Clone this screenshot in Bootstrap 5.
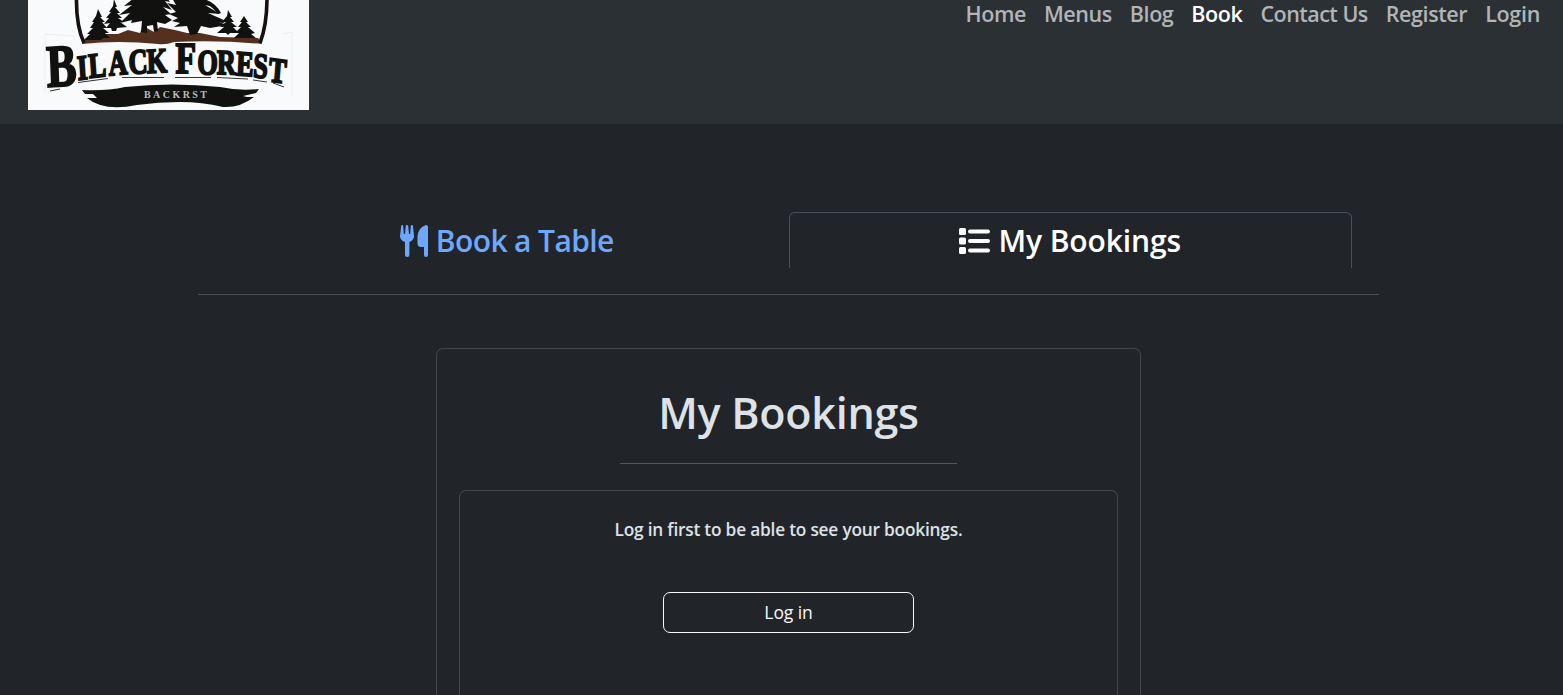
<!DOCTYPE html>
<html lang="en" data-bs-theme="dark">
<head>
<meta charset="utf-8">
<meta name="viewport" content="width=device-width, initial-scale=1">
<title>Black Forest - Bookings</title>
<link href="https://cdn.jsdelivr.net/npm/bootstrap@5.3.0/dist/css/bootstrap.min.css" rel="stylesheet">
<style>
html{font-size:18px}
body{font-family:"Open Sans","Noto Sans",sans-serif;background:#212529;height:695px;overflow:hidden}
.site-header{height:124px;background:#2b3035;padding:0 14px 0 28px}
.site-logo{width:281px;height:110px;display:block}
.top-links{line-height:28px}
.top-links .nav-link{font-size:21.5px;font-weight:600;letter-spacing:-.42px;padding:0 9px;color:#b2b4b6;white-space:nowrap}
.top-links .nav-link.active{color:#fff}
.top-links .contact{letter-spacing:-.52px}
.top-links .short{letter-spacing:-.3px}
.tabs-wrap{width:1181px;margin:88px 0 0 198px;padding:0 27px 26px;border-bottom:1px solid #4b5054}
.tabs-wrap .nav-link{height:56px;padding:0;font-size:30px;font-weight:600;letter-spacing:-.62px;border:1px solid transparent;border-bottom:0;border-radius:6px 6px 0 0;color:#6ea8fe;gap:8px}
.tabs-wrap .nav-link.active{color:#fff;border-color:#495057;background:transparent;letter-spacing:-.1px}
.booking-panel{width:705px;margin:53px 0 0 436px;height:347px;padding:0 22px;border:1px solid #42464a;border-bottom:0;border-radius:7px 7px 0 0;background:#212529}
.booking-panel h1{font-size:43px;font-weight:600;letter-spacing:-.25px;line-height:54px;margin:0;padding-top:37px;color:#dee2e6}
.rule{width:337px;height:1px;background:#53575a;margin:23px auto 26px}
.inner-panel{height:205px;border:1px solid #42464a;border-bottom:0;border-radius:7px 7px 0 0;padding-top:25px}
.inner-panel p{font-size:17.3px;font-weight:600;letter-spacing:-.21px;line-height:27px;margin:0 0 49px;color:#dee2e6}
.login-btn{width:251px;height:41px;font-size:17.5px;letter-spacing:-.1px;padding:0;line-height:39px;border:1px solid #f8f9fa;border-radius:7px;color:#f8f9fa}
</style>
</head>
<body>
<header class="site-header d-flex justify-content-between align-items-start">
<svg class="site-logo" viewBox="28 0 281 110" role="img" aria-label="Bilack Forest">
<rect x="28" width="281" height="110" fill="#f8fafc"/>
<path d="M45 34L75 36M45 34V94M292 32V95M282 34L292 32" stroke="#eceff1" fill="none"/>
<path d="M86 38L100 34 118 34 128 30 140 33 143 26 154 32 160 27 175 30 187 33 200 33 220 37 258 38 262 44Q220 40 174 42Q166 45 158 44Q118 40 82 44Z" fill="#55301f"/>
<path d="M76.500-2Q76 25 84 43M267-2Q267 25 260 43" stroke="#15110f" stroke-width="3.600" fill="none"/>
<g fill="#11110f">
<path d="M98 9L102 17 100 17 105 22 102 22 107 28 103 28 109 33 105 33 110 38 103 38 101 40 84 40 90 34 87 34 93 28 90 28 94 22 92 22 96 16Z"/>
<path d="M114-1L117 7 115 7 120 13 117 13 122 18 118 18 124 22 120 22 127 27 117 28 116 31 112 31 111 28 106 28 110 23 104 24 109 18 106 18 111 12 109 12 113 6Z"/>
<path d="M134-2L124 6 132 5 119 15 130 13 120 23 132 20 131 23 142 21 141 32 147 33 147 26 153 25 154 32 158 31 157 22 165 24 172 20 165 15 171 14 163 7 172 10 165 1 170 2 167-2Z"/>
<path d="M172-2L176 5 167 3 176 12 169 14 178 18 172 21 180 23 174 27 187 26 190 35 197 34 201 26 210 28 222 26 230 26 213 20 226 21 208 13 220 14 205 5 214 7 203-2Z"/>
<path d="M200-2Q215 1 221 13L218 14Q210 4 200 1ZM205 12Q214 20 227 21L223 23Q210 22 204 16Z"/>
<path d="M228 10L232 17 230 17 234 22 231 22 237 27 233 27 239 33 230 33 228 35 226 33 217 33 224 27 220 27 226 22 222 22 227 16Z"/>
<path d="M244 16L248 22 246 22 251 27 248 27 255 33 251 34 256 38 234 38 239 33 235 33 241 27 238 27 242 22 240 22Z"/>
<path d="M82 90Q107 91 125 87Q172 82 220 87Q239 91 259 89L256 93 243 96 247 97 254 97Q240 108 223 107Q202 102 180 102Q158 102 137 105Q104 112 87 98L97 98 93 94 85 94Z"/>
</g>
<text transform="scale(.75 1)" font-family="Liberation Serif" font-weight="700" font-size="35" fill="#11110f" stroke="#11110f" stroke-width="2" x="63 104 119 145.500 172 196 216 234 263 289 314.500 337 357.500" y="87 80 78 75.500 74 73 73 73 74 74 75 77 81" rotate="-3 -5 -5 -4 -3 -2 0 0 1 1 3 4 6"><tspan font-size="60">B</tspan>ILACK <tspan font-size="45">F</tspan>OREST</text>
<text x="144" y="98.300" textLength="63" font-family="Liberation Serif" font-weight="700" font-size="10" fill="#bcbcb9">BACKRST</text>
<path d="M50 91L60 89M78 82.500L108 78.500M122 77.500L164 77.500M175 77.500L211 77.500M217 77.500L248 79M253 80L267 82M273 83L284 87" stroke="#333" fill="none"/>
</svg>
<ul class="nav top-links flex-nowrap">
<li><a class="nav-link" href="#">Home</a></li><li><a class="nav-link" href="#">Menus</a></li><li><a class="nav-link" href="#">Blog</a></li><li><a class="nav-link active" href="#">Book</a></li><li><a class="nav-link contact" href="#">Contact Us</a></li><li><a class="nav-link" href="#">Register</a></li><li><a class="nav-link short" href="#">Login</a></li>
</ul>
</header>
<main>
<div class="tabs-wrap">
<ul class="nav nav-fill flex-nowrap">
<li class="w-50"><a class="nav-link d-flex justify-content-center align-items-center" href="#">
<svg width="28" height="32" viewBox="0 0 28 32" fill="currentColor"><path d="M2.200 0Q3.200 0 3.200 1L3.800 9H5L5.800 1Q6 0 7 0T8.200 1L9 9h1.200L10.800 1Q11 0 12 0T13 1l1 10q0 4-4.600 6v13q0 2-2.200 2T5 30V17Q0 15 0 11L1.200 1Q1.300 0 2.200 0Z"/><path d="M26 0q2 0 2 2v28q0 2-2 2t-2-2v-8h-3q-3.500 0-3.500-4v-7Q18 3 26 0Z"/></svg><span>Book a Table</span></a></li>
<li class="w-50"><a class="nav-link active d-flex justify-content-center align-items-center" href="#">
<svg width="31" height="26" viewBox="0 0 31 26" fill="currentColor"><rect width="7" height="7" rx="1.500"/><rect y="9.500" width="7" height="7" rx="1.500"/><rect y="19" width="7" height="7" rx="1.500"/><rect x="9" y="1.500" width="22" height="4" rx="2"/><rect x="9" y="11" width="22" height="4" rx="2"/><rect x="9" y="20.500" width="22" height="4" rx="2"/></svg><span>My Bookings</span></a></li>
</ul>
</div>
<section class="booking-panel text-center">
<h1>My Bookings</h1>
<div class="rule"></div>
<div class="inner-panel"><p>Log in first to be able to see your bookings.</p><a class="btn login-btn" href="#">Log in</a></div>
</section>
</main>
<script src="https://cdn.jsdelivr.net/npm/bootstrap@5.3.0/dist/js/bootstrap.bundle.min.js"></script>
</body>
</html>
